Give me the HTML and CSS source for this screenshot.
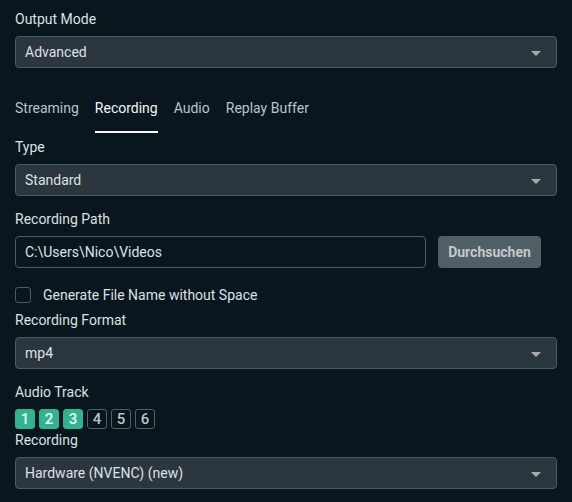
FILE: index.html
```html
<!DOCTYPE html>
<html lang="en">
<head>
    <meta charset="UTF-8">
    <title>Output Settings</title>
    <link rel="stylesheet" href="styles.css">
</head>
<body>
    <div class="panel">
        <div class="field">
            <label class="label">Output Mode</label>
            <div class="select">
                <span>Advanced</span>
                <span class="caret"></span>
            </div>
        </div>

        <div class="tabs">
            <span class="tab">Streaming</span>
            <span class="tab active">Recording</span>
            <span class="tab">Audio</span>
            <span class="tab">Replay Buffer</span>
        </div>

        <div class="field">
            <label class="label">Type</label>
            <div class="select">
                <span>Standard</span>
                <span class="caret"></span>
            </div>
        </div>

        <div class="field">
            <label class="label">Recording Path</label>
            <div class="path-row">
                <div class="input">C:\Users\Nico\Videos</div>
                <button class="button">Durchsuchen</button>
            </div>
        </div>

        <div class="checkbox-row">
            <span class="checkbox"></span>
            <span>Generate File Name without Space</span>
        </div>

        <div class="field">
            <label class="label">Recording Format</label>
            <div class="select">
                <span>mp4</span>
                <span class="caret"></span>
            </div>
        </div>

        <div class="field tracks-field">
            <label class="label">Audio Track</label>
            <div class="tracks">
                <span class="track on">1</span>
                <span class="track on">2</span>
                <span class="track on">3</span>
                <span class="track">4</span>
                <span class="track">5</span>
                <span class="track">6</span>
            </div>
        </div>

        <div class="field">
            <label class="label">Recording</label>
            <div class="select">
                <span>Hardware (NVENC) (new)</span>
                <span class="caret"></span>
            </div>
        </div>
    </div>
</body>
</html>
```

FILE: styles.css
```css
* {
    margin: 0;
    padding: 0;
    box-sizing: border-box;
}

:root {
    --bg: #09161d;
    --input-bg: #2b363e;
    --border: #4c5a61;
    --text: #dce1e3;
    --muted: #bcc3c7;
    --accent: #31b38f;
}

body {
    background-color: var(--bg);
    color: var(--text);
    font-family: Roboto, "Noto Sans", sans-serif;
    font-size: 14px;
    line-height: 16px;
}

.panel {
    width: 572px;
    padding: 11px 15px 0 15px;
}

.label {
    display: block;
    color: var(--text);
    margin-bottom: 9px;
}

.field {
    margin-bottom: 15px;
}

.select {
    height: 32px;
    display: flex;
    align-items: center;
    justify-content: space-between;
    padding: 0 15px 0 9px;
    background-color: var(--input-bg);
    border: 1px solid var(--border);
    border-radius: 4px;
    color: var(--text);
}

.caret {
    width: 0;
    height: 0;
    border-left: 5px solid transparent;
    border-right: 5px solid transparent;
    border-top: 5px solid #a7acaf;
    margin-top: 2px;
}

/* Tabs */
.tabs {
    display: flex;
    gap: 16px;
    margin-top: 17px;
    margin-bottom: 6px;
}

.tab {
    color: var(--muted);
    padding: 15px 0 15px 0;
    border-bottom: 2px solid transparent;
}

.tab.active {
    color: #f4f6f7;
    border-bottom-color: #f4f6f7;
}

/* Path */
.path-row {
    display: flex;
    gap: 12px;
}

.input {
    width: 411px;
    height: 32px;
    display: flex;
    align-items: center;
    padding: 0 9px;
    border: 1px solid var(--border);
    border-radius: 4px;
    color: var(--text);
}

.button {
    width: 103px;
    height: 32px;
    background-color: #505e65;
    color: #c3c9cc;
    border: none;
    border-radius: 4px;
    font-family: inherit;
    font-size: 14px;
    font-weight: bold;
}

.checkbox-row {
    display: flex;
    align-items: center;
    gap: 12px;
    margin-top: 19px;
    margin-bottom: 9px;
}

.checkbox {
    width: 16px;
    height: 16px;
    border: 1px solid var(--border);
    border-radius: 3px;
}

/* Audio tracks */
.tracks-field {
    margin-bottom: 3px;
}

.tracks {
    display: flex;
    gap: 4px;
}

.track {
    width: 20px;
    height: 20px;
    display: flex;
    align-items: center;
    justify-content: center;
    border: 1px solid #525f65;
    border-radius: 3px;
    color: var(--muted);
    font-size: 15px;
    font-weight: 500;
}

.track.on {
    background-color: var(--accent);
    border-color: var(--accent);
    color: #f2faf7;
}
```
